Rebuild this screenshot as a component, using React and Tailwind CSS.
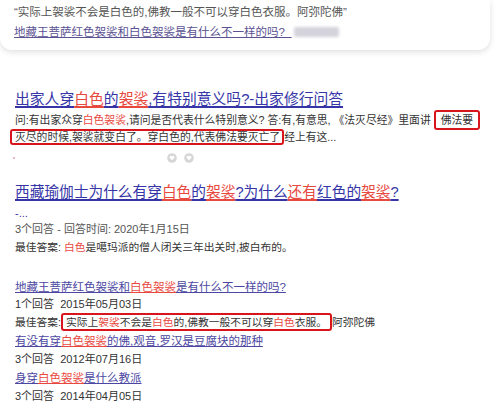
import React from "react";

const SANS = { fontFamily: '"Liberation Sans","Noto Sans CJK SC",sans-serif' };

function B({ children }) {
  return <span className="underline decoration-[1.5px] underline-offset-[2px] text-[#3535a8] decoration-[#3535a8]">{children}</span>;
}
function BR({ children }) {
  return <span className="underline decoration-[1.5px] underline-offset-[2px] text-[#e8493f] decoration-[#e8493f]">{children}</span>;
}
function P({ children }) {
  return <span className="underline decoration-[1px] underline-offset-[1px] text-[#4c47a2] decoration-[#4c47a2]">{children}</span>;
}
function PR({ children }) {
  return <span className="underline decoration-[1px] underline-offset-[1px] text-[#e8493f] decoration-[#e8493f]">{children}</span>;
}
function R({ children }) {
  return <span className="text-[#e8493f]">{children}</span>;
}
function Box({ children, cls = "" }) {
  return (
    <span className={"border-2 border-[#d8141c] rounded-[3px] " + cls}>{children}</span>
  );
}
function Vote() {
  return (
    <svg width="10" height="10" viewBox="0 0 10 10">
      <circle cx="5" cy="5" r="4.8" fill="#d6d6d6" />
      <path d="M5 7.3 L2.7 4.9 A1.2 1.2 0 0 1 5 3.6 A1.2 1.2 0 0 1 7.3 4.9 Z" fill="#ffffff" />
    </svg>
  );
}

export default function App() {
  return (
    <div className="w-[500px] h-[409px] bg-white overflow-hidden relative text-[#333]" style={SANS}>
      {/* top card */}
      <div className="w-[490px] h-[50px] bg-white rounded-b-[12px] shadow-[0_2px_6px_rgba(0,0,0,0.13)] pl-[14px] pt-[2px]">
        <div className="h-[20px] leading-[20px] text-[11.5px] text-[#555] whitespace-nowrap">
          “实际上袈裟不会是白色的,佛教一般不可以穿白色衣服。阿弥陀佛”
        </div>
        <div className="h-[20px] leading-[20px] text-[11.5px] whitespace-nowrap flex items-center">
          <span className="underline decoration-[1px] underline-offset-[1px] text-[#5a5292]">地藏王菩萨红色袈裟和白色袈裟是有什么不一样的吗?_</span>
          <span className="ml-[3px] w-[45px] h-[10px] bg-[#d4d3dc] blur-[1.5px] rounded-[2px]"></span>
        </div>
      </div>

      {/* section 2 */}
      <div className="mt-[38px] h-[22px] leading-[22px] pl-[15px] text-[14.8px] whitespace-nowrap">
        <B>出家人穿</B><BR>白色</BR><B>的</B><BR>袈裟</BR><B>,有特别意义吗?-出家修行问答</B>
      </div>
      <div className="mt-[2px] h-[17px] leading-[17px] pl-[15px] text-[10.8px] whitespace-nowrap text-[#333]">
        问:有出家众穿<R>白色袈裟</R>,请问是否代表什么特别意义? 答:有,有意思, 《法灭尽经》里面讲 <Box cls="px-[5px] py-[2px]">佛法要</Box>
      </div>
      <div className="h-[17px] leading-[17px] pl-[10px] text-[10.8px] whitespace-nowrap text-[#333]">
        <Box cls="pl-[3px] pr-[2px]">灭尽的时候,袈裟就变白了。穿白色的,代表佛法要灭亡了</Box>经上有这...
      </div>
      <div className="mt-[7px] h-[10px] flex items-center">
        <span className="ml-[13px] w-[2px] h-[2px] rounded-full bg-[#e6a0b0]"></span>
        <span className="ml-[152px]"><Vote /></span>
        <span className="ml-[7px]"><Vote /></span>
      </div>

      {/* section 3 */}
      <div className="mt-[18px] h-[22px] leading-[22px] pl-[15px] text-[14.7px] whitespace-nowrap">
        <B>西藏瑜伽士为什么有穿</B><BR>白色</BR><B>的</B><BR>袈裟</BR><B>?为什么</B><BR>还有</BR><B>红色的</B><BR>袈裟</BR><B>?</B>
      </div>
      <div className="mt-[2px] h-[16px] leading-[16px] pl-[15px] text-[11px] text-[#3535a8]">-...</div>
      <div className="h-[16px] leading-[16px] pl-[15px] text-[11px] text-[#555] whitespace-nowrap">
        3个回答 - 回答时间: 2020年1月15日
      </div>
      <div className="mt-[1px] h-[18px] leading-[18px] pl-[15px] text-[10.75px] text-[#333] whitespace-nowrap">
        最佳答案: <R>白色</R>是噶玛派的僧人闭关三年出关时,披白布的。
      </div>

      {/* section 4 */}
      <div className="mt-[22px] h-[18px] leading-[18px] pl-[15px] text-[11.5px] whitespace-nowrap">
        <P>地藏王菩萨红色袈裟和</P><PR>白色袈裟</PR><P>是有什么不一样的吗?</P>
      </div>
      <div className="h-[17px] leading-[17px] pl-[15px] text-[11px] text-[#333] whitespace-nowrap">
        1个回答&nbsp;&nbsp;2015年05月03日
      </div>
      <div className="h-[18px] leading-[18px] pl-[15px] text-[10.75px] text-[#333] whitespace-nowrap">
        最佳答案:<Box cls="pl-[3px] pr-[3px] py-[1px]">实际上<R>袈裟</R>不会是<R>白色</R>的,佛教一般不可以穿<R>白色</R>衣服。</Box>阿弥陀佛
      </div>
      <div className="mt-[1px] h-[18px] leading-[18px] pl-[15px] text-[11.5px] whitespace-nowrap">
        <P>有没有穿</P><PR>白色袈裟</PR><P>的佛,观音,罗汉是豆腐块的那种</P>
      </div>
      <div className="h-[18px] leading-[18px] pl-[15px] text-[11px] text-[#333] whitespace-nowrap">
        3个回答&nbsp;&nbsp;2012年07月16日
      </div>
      <div className="mt-[1px] h-[18px] leading-[18px] pl-[15px] text-[11.5px] whitespace-nowrap">
        <P>身穿</P><PR>白色袈裟</PR><P>是什么教派</P>
      </div>
      <div className="h-[18px] leading-[18px] pl-[15px] text-[11px] text-[#333] whitespace-nowrap">
        3个回答&nbsp;&nbsp;2014年04月05日
      </div>
    </div>
  );
}
